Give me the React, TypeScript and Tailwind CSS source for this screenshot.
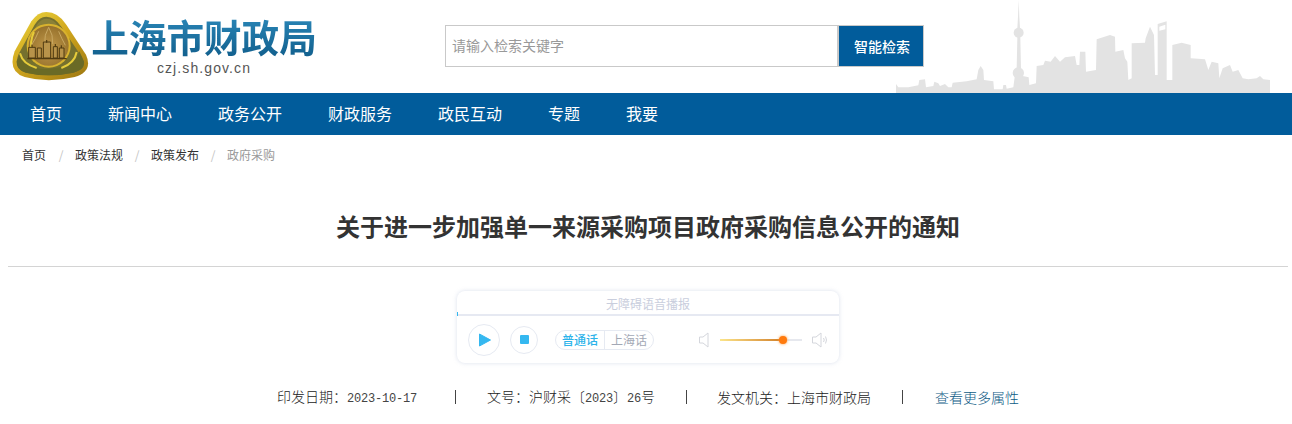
import React from "react";

const nav = ["首页", "新闻中心", "政务公开", "财政服务", "政民互动", "专题", "我要"];

function Logo() {
  return (
    <svg width="84" height="76" viewBox="0 0 252 228" className="shrink-0">
      <defs>
        <linearGradient id="g1" x1="0.1" y1="0" x2="0.9" y2="1">
          <stop offset="0" stopColor="#e9d23c" />
          <stop offset="0.45" stopColor="#d2a81e" />
          <stop offset="1" stopColor="#a07a12" />
        </linearGradient>
        <radialGradient id="g2" cx="0.5" cy="0.55" r="0.65">
          <stop offset="0" stopColor="#c39a4c" />
          <stop offset="1" stopColor="#8e6a26" />
        </radialGradient>
      </defs>
      <path d="M115 12 Q150 12 175 50 L234 140 Q256 190 200 207 Q120 226 50 207 Q-2 190 20 130 L70 40 Q90 12 115 12Z" fill="url(#g1)" />
      <path d="M115 26 Q140 26 160 56 L222 148 Q236 182 196 194 Q120 210 54 194 Q14 182 32 138 L80 50 Q94 26 115 26Z" fill="#75702e" />
      <path d="M115 32 Q138 32 152 56 L165 76 L72 76 L86 52 Q98 32 115 32Z" fill="#8a8038" />
      <circle cx="122" cy="113" r="66" fill="#d8b22e" />
      <circle cx="122" cy="113" r="60" fill="url(#g2)" />
      <path d="M62 170 Q100 196 180 170 Q206 160 214 130 L228 160 Q232 186 196 194 Q120 210 54 194 Q24 186 26 160 L36 140 Q42 160 62 170Z" fill="#6a6a26" />
      <path d="M36 136 Q44 168 86 180 M206 132 Q200 166 160 180 M78 72 Q64 100 72 134" stroke="#e6cc3a" strokeWidth="6" fill="none" />
      <path d="M92 70 Q84 90 70 112 M122 58 Q108 80 110 108 M122 58 Q136 80 134 108 M152 70 Q160 90 172 112" stroke="#c8a862" strokeWidth="3" fill="none" />
      <path d="M62 118 L82 118 L82 150 L62 150Z M88 120 L100 120 L100 150 L88 150Z M106 102 L128 102 L128 150 L106 150Z M136 116 L148 116 L148 150 L136 150Z M154 120 L168 120 L168 150 L154 150Z" fill="#b8934a" stroke="#4f3a10" strokeWidth="3" />
      <path d="M116 96 V104 M72 110 V118 M142 108 V116 M160 112 V120 M58 152 H176" stroke="#4f3a10" strokeWidth="3.5" fill="none" />
    </svg>
  );
}

function Skyline() {
  return (
    <svg width="412" height="93" viewBox="0 0 1236 279" className="shrink-0">
      <path
        fill="#e3e3e3"
        d="M48 279 L48 252 L55 262 L85 262 L115 256 L118 240 L135 238 L138 262 L160 258 L163 245 L175 250 L180 258 L195 252 L205 262 L215 262 L218 248 L260 244 L290 238 L295 210 L302 198 L310 210 L312 240 L340 244 L342 268 L368 268 L370 255 L378 255 L380 266 L400 262 L404 232 L410 205 L412 115 L412 85 L414 50 L416 0 L418 50 L420 85 L421 115 L423 205 L428 228 L446 232 L448 255 L468 250 L470 198 L490 195 L495 182 L512 185 L525 168 L540 185 L555 172 L585 168 L590 195 L598 195 L600 155 L616 155 L618 215 L648 210 L650 118 L690 105 L705 110 L706 155 L730 150 L735 175 L742 185 L745 240 L755 235 L755 130 L795 128 L797 115 L810 80 L822 105 L825 225 L833 225 L833 72 L860 64 L860 240 L877 240 L877 135 L905 128 L932 135 L932 175 L975 178 L985 210 L995 185 L1015 190 L1018 235 L1028 205 L1050 195 L1058 215 L1075 210 L1088 235 L1105 238 L1130 235 L1140 228 L1150 238 L1170 240 L1170 279 Z"
      />
      <circle cx="416" cy="98" r="15" fill="#e3e3e3" />
      <circle cx="415" cy="219" r="17" fill="#e3e3e3" />
      <path d="M838 80 L856 74 L856 88 L838 92Z" fill="#ffffff" />
    </svg>
  );
}

function Slash() {
  return <span className="w-[28px] text-center text-[#c4c4c4]">/</span>;
}

function Num({ children }: { children: React.ReactNode }) {
  return <span className="font-['Liberation_Mono'] text-[12px] font-normal tracking-[-0.2px] text-[#444]">{children}</span>;
}

function Sep() {
  return <span className="h-[14px] w-px bg-[#444]" />;
}

export default function App() {
  return (
    <div className="h-[424px] w-[1292px] overflow-hidden bg-white font-['Noto_Sans_CJK_SC',sans-serif] text-[#333]">
      <header className="flex h-[93px] pl-[8px]">
        <div className="flex w-[437px] shrink-0 pt-[8px]">
          <Logo />
          <div className="ml-[-1px] flex w-[226px] flex-col items-center pt-[7px]">
            <div className="bg-linear-to-b from-[#2a87b8] to-[#12608e] bg-clip-text text-[37.6px] leading-[42px] font-bold whitespace-nowrap text-transparent">
              上海市财政局
            </div>
            <div className="mt-[3px] font-['Liberation_Sans'] text-[14px] leading-[16px] tracking-[1.1px] text-[#555]">
              czj.sh.gov.cn
            </div>
          </div>
        </div>
        <div className="flex h-[42px] w-[479px] shrink-0 translate-y-[25px]">
          <div className="flex flex-1 items-center border border-[#c9c9c9] pb-[2px] pl-[6px] text-[14px] text-[#999]">
            请输入检索关键字
          </div>
          <div className="flex w-[86px] items-center justify-center border border-[#c9c9c9] bg-[#015c9b] pl-[2px] text-[14px] font-medium text-white">
            智能检索
          </div>
        </div>
        <div className="ml-[-44px]">
          <Skyline />
        </div>
      </header>

      <nav className="flex h-[42px] items-center gap-[46px] bg-[#015c9b] pb-[2px] pl-[30px] text-[16px] text-white">
        {nav.map((n) => (
          <span key={n}>{n}</span>
        ))}
      </nav>

      <div className="flex h-[40px] items-center pl-[22px] text-[12px] text-[#333]">
        <span className="w-[25px]">首页</span>
        <Slash />
        <span>政策法规</span>
        <Slash />
        <span>政策发布</span>
        <Slash />
        <span className="text-[#999]">政府采购</span>
      </div>

      <div className="mr-[4px] ml-[8px] border-b border-[#d4d4d4] pt-[31px] pb-[20px]">
        <h1 className="text-center text-[24px] leading-[40px] font-bold text-[#333]">
          关于进一步加强单一来源采购项目政府采购信息公开的通知
        </h1>
      </div>

      <div className="mt-[24px] ml-[457px] h-[72px] w-[382px] rounded-[8px] bg-white shadow-[0_0_4px_rgba(150,165,200,0.35)]">
        <div className="relative h-[25px] border-b-2 border-[#e6e9f2] text-center text-[12px] leading-[25px] text-[#c9cedd]">
          无障碍语音播报
          <span className="absolute bottom-[-2px] left-0 h-[4px] w-px bg-[#35b8f0]" />
        </div>
        <div className="flex h-[47px] items-center pl-[11px]">
          <div className="flex h-[32px] w-[32px] items-center justify-center rounded-full border border-[#e6eaf2]">
            <svg width="12" height="14" viewBox="0 0 12 14" className="ml-[2px]">
              <path d="M0.5 1 L11.5 7 L0.5 13Z" fill="#35b8f0" stroke="#35b8f0" strokeLinejoin="round" />
            </svg>
          </div>
          <div className="ml-[10px] flex h-[28px] w-[28px] items-center justify-center rounded-full border border-[#e6eaf2]">
            <span className="h-[9px] w-[9px] rounded-[1px] bg-[#35b8f0]" />
          </div>
          <div className="ml-[17px] flex h-[20px] w-[99px] items-center rounded-full border border-[#e6eaf2] text-[12px] leading-[18px]">
            <span className="w-[49px] border-r border-[#e6eaf2] text-center font-medium text-[#2cb3ea]">普通话</span>
            <span className="flex-1 text-center text-[#a3a8b5]">上海话</span>
          </div>
          <svg width="10" height="16" viewBox="0 0 10 16" className="ml-[45px]">
            <path d="M0.5 5 H4 L9 1 V15 L4 11 H0.5Z" fill="none" stroke="#d4d6dc" />
          </svg>
          <div className="relative ml-[11px] h-[2px] w-[82px] bg-[#e6e8ee]">
            <div className="h-[2px] w-[63px] bg-linear-to-r from-[#fbe58a] to-[#d07f25]" />
            <span className="absolute top-[-3px] left-[59px] h-[8px] w-[8px] rounded-full bg-[#ff7a0d] shadow-[0_0_3px_#ff9a3c]" />
          </div>
          <svg width="16" height="16" viewBox="0 0 16 16" className="ml-[10px]">
            <path d="M0.5 5 H4 L9 1 V15 L4 11 H0.5Z" fill="none" stroke="#d4d6dc" />
            <path d="M11.5 6 Q13 8 11.5 10 M13.5 4.5 Q15.5 8 13.5 11.5" fill="none" stroke="#d4d6dc" />
          </svg>
        </div>
      </div>

      <div className="mt-[24px] flex h-[20px] items-center pl-[277px] text-[14px] leading-[20px] font-light text-[#222]">
        <span className="w-[178px]">
          印发日期：<Num>2023-10-17</Num>
        </span>
        <Sep />
        <span className="ml-[31px] w-[199px]">
          文号：沪财采〔<Num>2023</Num>〕<Num>26</Num>号
        </span>
        <Sep />
        <span className="ml-[30px] w-[185px]">发文机关：上海市财政局</span>
        <Sep />
        <span className="ml-[32px] text-[#0f5c86]">查看更多属性</span>
      </div>
    </div>
  );
}
